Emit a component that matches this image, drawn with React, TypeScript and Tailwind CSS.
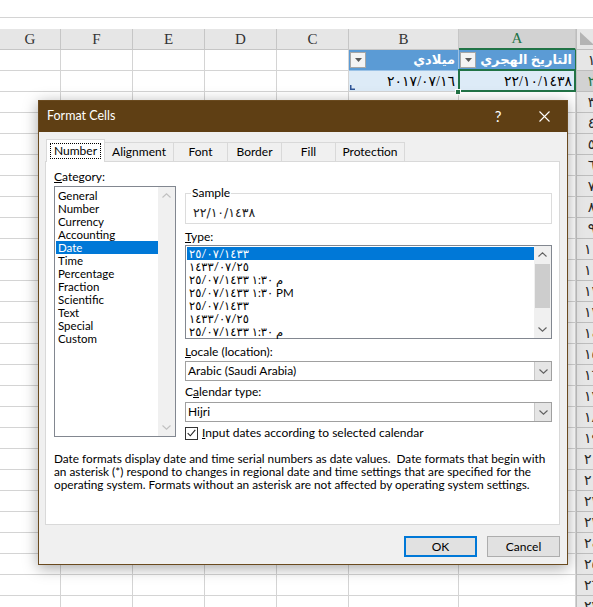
import React from 'react';

const AR_DIGITS = '٠١٢٣٤٥٦٧٨٩';
const toAr = (n: number) => String(n).replace(/\d/g, (d) => AR_DIGITS[Number(d)]);

const COLS = [
  { id: 'G', w: 'w-[61px]' },
  { id: 'F', w: 'w-[72px]' },
  { id: 'E', w: 'w-[72px]' },
  { id: 'D', w: 'w-[72px]' },
  { id: 'C', w: 'w-[72px]' },
  { id: 'B', w: 'w-[110px]' },
  { id: 'A', w: 'w-[117px]' },
];

const CATEGORIES = [
  'General',
  'Number',
  'Currency',
  'Accounting',
  'Date',
  'Time',
  'Percentage',
  'Fraction',
  'Scientific',
  'Text',
  'Special',
  'Custom',
];

const TYPES = [
  '٢٥/٠٧/١٤٣٣',
  '١٤٣٣/٠٧/٢٥',
  '٢٥/٠٧/١٤٣٣ ١:٣٠ م',
  '٢٥/٠٧/١٤٣٣ ١:٣٠ PM',
  '٢٥/٠٧/١٤٣٣',
  '١٤٣٣/٠٧/٢٥',
  '٢٥/٠٧/١٤٣٣ ١:٣٠ م',
];

const TABS = [
  { label: 'Number', w: 'w-[59px]' },
  { label: 'Alignment', w: 'w-[69px]' },
  { label: 'Font', w: 'w-[54px]' },
  { label: 'Border', w: 'w-[54px]' },
  { label: 'Fill', w: 'w-[54px]' },
  { label: 'Protection', w: 'w-[69px]' },
];

const Chevron = ({ up, color }: { up?: boolean; color: string }) => (
  <svg width="9" height="5" viewBox="0 0 9 5">
    <path
      d={up ? 'M0.5 4.5L4.5 0.8L8.5 4.5' : 'M0.5 0.5L4.5 4.2L8.5 0.5'}
      fill="none"
      stroke={color}
      strokeWidth="1.1"
    />
  </svg>
);

const FilterButton = () => (
  <div className="flex h-[16px] w-[16px] shrink-0 items-center justify-center border border-[#a6a6a6] bg-[#f4f4f4]">
    <svg width="7" height="4" viewBox="0 0 7 4">
      <path d="M0 0h7L3.5 4z" fill="#5a5a5a" />
    </svg>
  </div>
);

const SheetRow = ({ n }: { n: number }) => (
  <div className="flex h-[21px]">
    {COLS.map((c) => {
      if (n === 1 && (c.id === 'A' || c.id === 'B')) {
        return (
          <div
            key={c.id}
            className={`${c.w} flex shrink-0 items-center justify-between border-b border-r bg-[#5b9bd5] pl-[1px] pr-[3px] ${
              c.id === 'A' ? 'border-[#9bc2e6] border-r-[#217346]' : 'border-[#9bc2e6]'
            }`}
          >
            <FilterButton />
            <span dir="rtl" className="text-[13px] font-bold text-white">
              {c.id === 'A' ? 'التاريخ الهجري' : 'ميلادي'}
            </span>
          </div>
        );
      }
      if (n === 2 && (c.id === 'A' || c.id === 'B')) {
        return (
          <div
            key={c.id}
            className={`${c.w} relative flex shrink-0 items-center justify-end border-b border-r border-[#d4d4d4] bg-[#ddebf7] pr-[3px] text-[14px] text-black`}
          >
            <span>{c.id === 'A' ? '٢٢/١٠/١٤٣٨' : '٢٠١٧/٠٧/١٦'}</span>
            {c.id === 'B' && (
              <svg className="absolute bottom-[1px] left-[1px]" width="5" height="5" viewBox="0 0 5 5">
                <path d="M0 0h1.5v3.5H5V5H0z" fill="#2f5597" />
              </svg>
            )}
            {c.id === 'A' && (
              <>
                <div className="absolute -left-[1px] -top-[2px] bottom-[-1px] right-[-1px] border-2 border-[#217346]" />
                <div className="absolute -bottom-[4px] -left-[4px] h-[6px] w-[6px] border border-white bg-[#217346]" />
              </>
            )}
          </div>
        );
      }
      return <div key={c.id} className={`${c.w} shrink-0 border-b border-r border-[#d4d4d4] bg-white`} />;
    })}
    <div
      className={`flex w-[30px] shrink-0 items-center justify-center border-b border-l border-[#bdbdbd] text-[14px] ${
        n === 2 ? 'bg-[#d2d2d2] text-[#217346]' : 'bg-[#e6e6e6] text-[#262626]'
      }`}
    >
      {toAr(n)}
    </div>
  </div>
);

const Combo = ({ value }: { value: string }) => (
  <div className="flex h-[20px] items-center border border-[#a0a0a0] bg-white">
    <span className="flex-1 pl-[2px]">{value}</span>
    <div className="flex h-full w-[17px] items-center justify-center border-l border-[#c8c8c8] bg-[#e5e5e5]">
      <Chevron color="#606060" />
    </div>
  </div>
);

export default function App() {
  return (
    <div className="relative h-[607px] w-[593px] overflow-hidden bg-white font-['Liberation_Serif','DejaVu_Sans',serif]">
      <div className="h-[18px] border-b border-[#d4d4d4]" />
      <div className="h-[11px]" />

      {/* column headers */}
      <div className="flex h-[21px]">
        {COLS.map((c) => (
          <div
            key={c.id}
            className={`${c.w} flex shrink-0 items-center justify-center text-[15px] ${
              c.id === 'A'
                ? 'border-b-2 border-r border-[#217346] border-r-[#c6c6c6] bg-[#d2d2d2] text-[#217346]'
                : 'border-b border-r border-[#c6c6c6] bg-[#e6e6e6] text-[#333]'
            }`}
          >
            {c.id}
          </div>
        ))}
        <div className="w-[30px] shrink-0 border-b border-l border-[#bdbdbd] bg-[#e6e6e6] pl-[3px] pt-[3px]">
          <svg width="14" height="13" viewBox="0 0 14 13">
            <path d="M0 0V13H14z" fill="#b4b4b4" />
          </svg>
        </div>
      </div>

      {Array.from({ length: 27 }, (_, i) => (
        <SheetRow key={i} n={i + 1} />
      ))}

      {/* Format Cells dialog */}
      <div className="absolute left-[38px] top-[100px] w-[530px] border border-[#6a4a1f] bg-[#f0f0f0] font-['Lato','DejaVu_Sans',sans-serif] text-[12px] text-black shadow-[0_3px_14px_rgba(0,0,0,0.35)]">
        <div className="flex h-[31px] items-center justify-between bg-[#5f3f14] pl-[8px] text-white">
          <span className="text-[12.5px]">Format Cells</span>
          <div className="flex h-full items-center">
            <span className="w-[46px] text-center text-[15px]">?</span>
            <span className="flex w-[46px] items-center justify-center">
              <svg width="11" height="11" viewBox="0 0 11 11">
                <path d="M0.5 0.5L10.5 10.5M10.5 0.5L0.5 10.5" stroke="white" strokeWidth="1.1" />
              </svg>
            </span>
          </div>
        </div>

        <div className="pb-[7px] pl-[6px] pr-[7px] pt-[7px]">
          <div className="relative z-10 -mb-[1px] flex h-[23px] items-end pl-[1px]">
            {TABS.map((t, i) =>
              i === 0 ? (
                <div
                  key={t.label}
                  className={`${t.w} flex h-[23px] items-start justify-center border border-b-0 border-[#d9d9d9] bg-white pt-[3px]`}
                >
                  <span className="border border-dotted border-black px-[3px] leading-[14px]">{t.label}</span>
                </div>
              ) : (
                <div
                  key={t.label}
                  className={`${t.w} mb-[1px] flex h-[19px] items-center justify-center border-r border-t border-[#d9d9d9] bg-[#f0f0f0]`}
                >
                  {t.label}
                </div>
              ),
            )}
          </div>

          <div className="h-[364px] border border-[#d9d9d9] bg-white pl-[8px] pr-[7px] pt-[7px]">
            <div className="flex">
              {/* category */}
              <div className="mr-[9px] w-[122px] shrink-0">
                <div className="h-[16px] leading-[16px]">
                  <span className="underline">C</span>ategory:
                </div>
                <div className="mt-[1px] flex h-[251px] border border-[#828790] bg-white">
                  <div className="flex-1 pl-[1px] pt-[2px] text-[11.5px]">
                    {CATEGORIES.map((c) => (
                      <div
                        key={c}
                        className={`h-[13px] pl-[2px] leading-[13px] ${c === 'Date' ? 'bg-[#0078d7] text-white' : ''}`}
                      >
                        {c}
                      </div>
                    ))}
                  </div>
                  <div className="flex w-[17px] flex-col justify-between bg-[#f0f0f0]">
                    <div className="flex h-[17px] items-center justify-center">
                      <Chevron up color="#c0c0c0" />
                    </div>
                    <div className="flex h-[17px] items-center justify-center">
                      <Chevron color="#c0c0c0" />
                    </div>
                  </div>
                </div>
              </div>

              {/* right side */}
              <div className="min-w-0 flex-1">
                <fieldset className="mt-[16px] border border-[#dcdcdc] px-[7px] pb-[2px] pt-[4px]">
                  <legend className="-ml-[2px] px-[1px] leading-[16px]">Sample</legend>
                  <div className="h-[16px] font-['DejaVu_Sans',sans-serif] text-[12.5px] leading-[16px] text-[#222]">
                    ٢٢/١٠/١٤٣٨
                  </div>
                </fieldset>

                <div className="mt-[5px] h-[16px] leading-[16px]">
                  <span className="underline">T</span>ype:
                </div>
                <div className="flex h-[94px] border border-[#828790] bg-white">
                  <div className="flex-1 pl-[1px] pt-[1px] text-[11.5px]">
                    {TYPES.map((t, i) => (
                      <div
                        key={i}
                        className={`h-[13px] whitespace-nowrap pl-[2px] leading-[13px] [direction:ltr] [unicode-bidi:bidi-override] ${
                          i === 0 ? 'bg-[#0078d7] text-white' : ''
                        }`}
                      >
                        {t}
                      </div>
                    ))}
                  </div>
                  <div className="flex w-[17px] flex-col bg-[#f0f0f0]">
                    <div className="flex h-[17px] items-center justify-center">
                      <Chevron up color="#606060" />
                    </div>
                    <div className="mx-[1px] mt-[1px] h-[44px] bg-[#cdcdcd]" />
                    <div className="flex-1" />
                    <div className="flex h-[17px] items-center justify-center">
                      <Chevron color="#606060" />
                    </div>
                  </div>
                </div>

                <div className="mt-[5px] h-[16px] leading-[16px]">
                  <span className="underline">L</span>ocale (location):
                </div>
                <div className="mt-[1px]">
                  <Combo value="Arabic (Saudi Arabia)" />
                </div>

                <div className="mt-[3px] h-[16px] leading-[16px]">
                  C<span className="underline">a</span>lendar type:
                </div>
                <div className="mt-[2px]">
                  <Combo value="Hijri" />
                </div>

                <div className="mt-[3px] flex h-[16px] items-center">
                  <div className="flex h-[13px] w-[13px] items-center justify-center border border-[#333] bg-white">
                    <svg width="9" height="8" viewBox="0 0 9 8">
                      <path d="M0.7 4.2L3.3 6.8L8.3 0.8" fill="none" stroke="#222" strokeWidth="1.1" />
                    </svg>
                  </div>
                  <span className="ml-[4px]">
                    <span className="underline">I</span>nput dates according to selected calendar
                  </span>
                </div>
              </div>
            </div>

            <p className="mt-[11px] whitespace-nowrap text-[11.8px] leading-[13px]">
              Date formats display date and time serial numbers as date values.&nbsp; Date formats that begin with
              <br />
              an asterisk (*) respond to changes in regional date and time settings that are specified for the
              <br />
              operating system. Formats without an asterisk are not affected by operating system settings.
            </p>
          </div>

          <div className="mt-[11px] flex justify-end gap-[10px]">
            <button className="flex h-[21px] w-[73px] items-center justify-center border-2 border-[#0078d7] bg-[#e1e1e1]">
              OK
            </button>
            <button className="flex h-[21px] w-[73px] items-center justify-center border border-[#adadad] bg-[#e1e1e1]">
              Cancel
            </button>
          </div>
        </div>
      </div>
    </div>
  );
}
